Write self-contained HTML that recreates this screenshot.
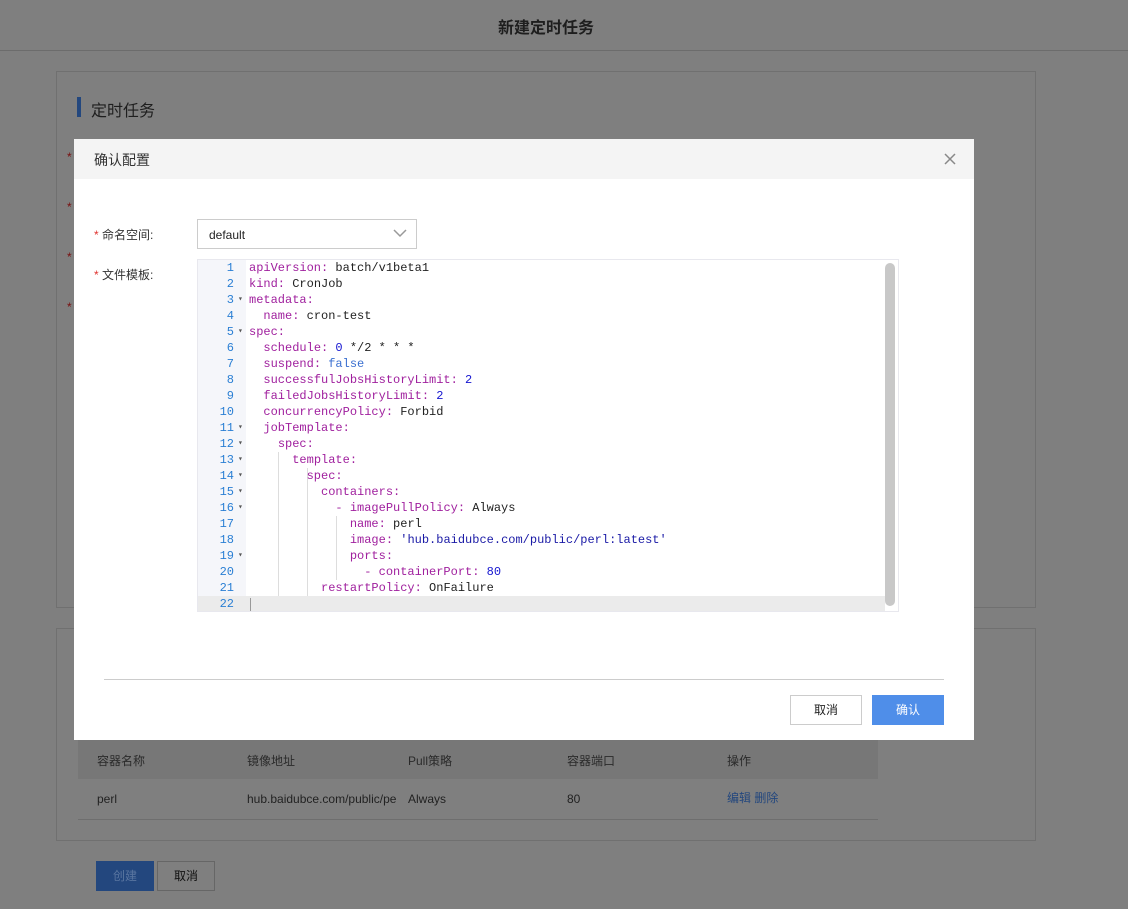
<!DOCTYPE html>
<html><head><meta charset="utf-8">
<style>
*{box-sizing:border-box;margin:0;padding:0}
body{width:1128px;height:909px;background:#7f7f7f;font-family:"Liberation Sans","Noto Sans CJK SC",sans-serif;position:relative;overflow:hidden;font-size:12px;color:#222}
.abs{position:absolute}
.topbar{left:0;top:0;width:1128px;height:51px;border-bottom:1px solid #6c6c6c}
.title{left:498px;top:14px;font-size:16px;color:#1e1e1e;font-weight:bold}
.card{border:1px solid #707070;background:#7f7f7f}
.modal{left:74px;top:139px;width:900px;height:601px;background:#fff}
.mh{left:0;top:0;width:900px;height:40px;background:#f4f4f4}
.code{font-family:"Liberation Mono",monospace;font-size:12px;line-height:16px;white-space:pre}
.k{color:#a0209e}.n{color:#1515d0}.b{color:#3a6fd0}.s{color:#1a1aa6}
.ln{color:#2a7fd4;text-align:right;width:36px}
.arr{color:#555;font-size:8px}
</style></head><body>
<div class="abs topbar"></div>
<div class="abs title">新建定时任务</div>
<div class="abs card" style="left:56px;top:71px;width:980px;height:537px"></div>
<div class="abs" style="left:77px;top:97px;width:4px;height:20px;background:#23477e"></div>
<div class="abs" style="left:91px;top:97px;font-size:16px;color:#1e1e1e">定时任务</div>
<div class="abs" style="left:67px;top:150px;color:#7a1010">*</div>
<div class="abs" style="left:67px;top:200px;color:#7a1010">*</div>
<div class="abs" style="left:67px;top:250px;color:#7a1010">*</div>
<div class="abs" style="left:67px;top:300px;color:#7a1010">*</div>
<div class="abs card" style="left:56px;top:628px;width:980px;height:213px"></div>
<div class="abs" style="left:78px;top:740px;width:800px;height:39px;background:#777"></div>
<div class="abs" style="left:78px;top:819px;width:800px;height:1px;background:#6e6e6e"></div>
<div class="abs" style="left:97px;top:752px;color:#2a2a2a;font-size:12px">容器名称</div>
<div class="abs" style="left:247px;top:752px;color:#2a2a2a">镜像地址</div>
<div class="abs" style="left:408px;top:752px;color:#2a2a2a">Pull策略</div>
<div class="abs" style="left:567px;top:752px;color:#2a2a2a">容器端口</div>
<div class="abs" style="left:727px;top:752px;color:#2a2a2a">操作</div>
<div class="abs" style="left:97px;top:792px;color:#222">perl</div>
<div class="abs" style="left:247px;top:792px;width:149px;overflow:hidden;white-space:nowrap;color:#222">hub.baidubce.com/public/perl</div>
<div class="abs" style="left:408px;top:792px;color:#222">Always</div>
<div class="abs" style="left:567px;top:792px;color:#222">80</div>
<div class="abs" style="left:727px;top:791px;color:#23477e;line-height:14px">编辑 删除</div>
<div class="abs" style="left:96px;top:861px;width:58px;height:30px;background:#23477e;color:#5a76a0;text-align:center;line-height:30px">创建</div>
<div class="abs" style="left:157px;top:861px;width:58px;height:30px;border:1px solid #666;color:#111;text-align:center;line-height:28px">取消</div>

<div class="abs modal">
 <div class="abs mh"></div>
 <div class="abs" style="left:20px;top:11px;font-size:14px;color:#333">确认配置</div>
 <svg class="abs" style="left:870px;top:14px" width="12" height="12"><path d="M1 1L11 11M11 1L1 11" stroke="#888" stroke-width="1.5"/></svg>
 <div class="abs" style="left:20px;top:87px;color:#333"><span style="color:#e0322e">*</span> 命名空间:</div>
 <div class="abs" style="left:20px;top:127px;color:#333"><span style="color:#e0322e">*</span> 文件模板:</div>
 <div class="abs" style="left:123px;top:80px;width:220px;height:30px;border:1px solid #ccc;padding:8px 11px;color:#222">default</div>
 <svg class="abs" style="left:319px;top:90px" width="14" height="9"><path d="M1 1L7 7L13 1" stroke="#999" stroke-width="1.5" fill="none"/></svg>
 <div class="abs" style="left:123px;top:120px;width:702px;height:353px;border:1px solid #e8e8ee;overflow:hidden">
  <div class="abs" style="left:0;top:0;width:48px;height:353px;background:#f5f6fa"></div>
  <div class="abs" style="left:0;top:336px;width:687px;height:16px;background:#ebebeb"></div>
  <div class="abs" style="left:687px;top:3px;width:10px;height:343px;background:#c8c8c8;border-radius:5px"></div>
  <div class="abs code ln" style="left:0;top:0">1
2
3
4
5
6
7
8
9
10
11
12
13
14
15
16
17
18
19
20
21
22</div>
  <div class="abs code arr" style="left:40px;top:0;line-height:16px">

▾

▾





▾
▾
▾
▾
▾
▾


▾</div>
  <div class="abs" style="left:80px;top:192px;width:1px;height:144px;background:#ddd"></div>
  <div class="abs" style="left:109px;top:208px;width:1px;height:128px;background:#ddd"></div>
  <div class="abs" style="left:138px;top:256px;width:1px;height:64px;background:#ddd"></div>
  <div class="abs" style="left:52px;top:338px;width:1px;height:13px;background:#999"></div>
  <div class="abs code" style="left:51px;top:0"><span class="k">apiVersion:</span> batch/v1beta1
<span class="k">kind:</span> CronJob
<span class="k">metadata:</span>
  <span class="k">name:</span> cron-test
<span class="k">spec:</span>
  <span class="k">schedule:</span> <span class="n">0</span> */2 * * *
  <span class="k">suspend:</span> <span class="b">false</span>
  <span class="k">successfulJobsHistoryLimit:</span> <span class="n">2</span>
  <span class="k">failedJobsHistoryLimit:</span> <span class="n">2</span>
  <span class="k">concurrencyPolicy:</span> Forbid
  <span class="k">jobTemplate:</span>
    <span class="k">spec:</span>
      <span class="k">template:</span>
        <span class="k">spec:</span>
          <span class="k">containers:</span>
            <span class="k">- imagePullPolicy:</span> Always
              <span class="k">name:</span> perl
              <span class="k">image:</span> <span class="s">'hub.baidubce.com/public/perl:latest'</span>
              <span class="k">ports:</span>
                <span class="k">- containerPort:</span> <span class="n">80</span>
          <span class="k">restartPolicy:</span> OnFailure
</div>
 </div>
 <div class="abs" style="left:30px;top:540px;width:840px;height:1px;background:#ccc"></div>
 <div class="abs" style="left:716px;top:556px;width:72px;height:30px;border:1px solid #ccc;text-align:center;line-height:28px;color:#222">取消</div>
 <div class="abs" style="left:798px;top:556px;width:72px;height:30px;background:#4f8ee9;text-align:center;line-height:30px;color:#fff">确认</div>
</div>
</body></html>
